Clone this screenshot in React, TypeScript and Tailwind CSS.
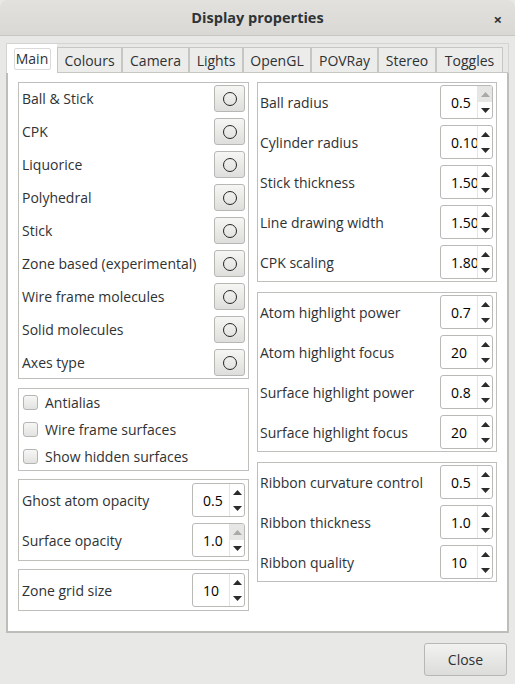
import React from "react";

const FONT = { fontFamily: '"Open Sans", "Noto Sans", sans-serif' };

function UpArrow({ disabled }: { disabled?: boolean }) {
  return (
    <svg width="9" height="5" viewBox="0 0 9 5">
      <path d="M0 5 L4.5 0 L9 5 Z" fill={disabled ? "#a9a9a9" : "#2b2b2b"} />
    </svg>
  );
}
function DownArrow() {
  return (
    <svg width="9" height="5" viewBox="0 0 9 5">
      <path d="M0 0 L4.5 5 L9 0 Z" fill="#2b2b2b" />
    </svg>
  );
}

function Spin({ value, upDisabled }: { value: string; upDisabled?: boolean }) {
  return (
    <div className="flex h-[34px] w-[53px] shrink-0 overflow-hidden rounded-[3px] border border-[#b9b9b6] bg-white">
      <div className="flex min-w-0 flex-1 items-center overflow-hidden whitespace-nowrap pl-[10px] text-[14px] text-black">
        {value}
      </div>
      <div className="flex w-[15px] flex-col border-l border-[#e4e4e2]">
        <div
          className={
            upDisabled
              ? "flex flex-1 items-center justify-center bg-[#e6e6e4]"
              : "flex flex-1 items-center justify-center"
          }
        >
          <UpArrow disabled={upDisabled} />
        </div>
        <div className="flex flex-1 items-center justify-center">
          <DownArrow />
        </div>
      </div>
    </div>
  );
}

function StyleButton() {
  return (
    <div className="flex h-[27px] w-[31px] items-center justify-center rounded-[3px] border border-[#b7b7b4] bg-gradient-to-b from-[#f6f6f5] to-[#dededc]">
      <div className="h-[14px] w-[14px] rounded-full border border-[#262626]" />
    </div>
  );
}

function Checkbox() {
  return (
    <div className="h-[15px] w-[15px] rounded-[3px] border border-[#b4b4b1] bg-gradient-to-b from-[#f7f7f6] to-[#e2e2e0]" />
  );
}

const styles = [
  "Ball & Stick",
  "CPK",
  "Liquorice",
  "Polyhedral",
  "Stick",
  "Zone based (experimental)",
  "Wire frame molecules",
  "Solid molecules",
  "Axes type",
];

const tabs: { name: string; w: string }[] = [
  { name: "Colours", w: "w-[65px]" },
  { name: "Camera", w: "w-[67px]" },
  { name: "Lights", w: "w-[54px]" },
  { name: "OpenGL", w: "w-[68px]" },
  { name: "POVRay", w: "w-[67px]" },
  { name: "Stereo", w: "w-[58px]" },
  { name: "Toggles", w: "w-[67px]" },
];

function SpinRow({ label, value, upDisabled }: { label: string; value: string; upDisabled?: boolean }) {
  return (
    <div className="flex h-[34px] items-center justify-between">
      <span>{label}</span>
      <Spin value={value} upDisabled={upDisabled} />
    </div>
  );
}

export default function App() {
  return (
    <div
      className="flex h-[684px] w-[515px] flex-col overflow-hidden bg-[#e8e8e7] text-[14px] text-[#2f3234]"
      style={FONT}
    >
      {/* title bar */}
      <div className="relative flex h-[36px] shrink-0 items-center justify-center rounded-t-[8px] border-b border-[#c9c7c3] bg-gradient-to-b from-[#e3e1de] to-[#dad8d4]">
        <span className="text-[14.5px] font-bold text-[#2e3436]">Display properties</span>
        <span className="absolute right-[13px] top-[8px] text-[15px] font-bold text-[#2e3436]">×</span>
      </div>

      {/* tab widget */}
      <div className="mx-[6px] mt-[7px] flex h-[590px] flex-col">
        <div className="flex h-[30px] border-l border-r border-t border-[#d4d4d2]">
          <div className="flex h-[29px] w-[50px] items-center justify-center self-end bg-white">
            <div className="flex h-[22px] w-[37px] items-center justify-center rounded-[2px] border border-[#dadad8] text-[#2f3234]">
              Main
            </div>
          </div>
          {tabs.map((t) => (
            <div
              key={t.name}
              className={`${t.w} mt-[3px] flex h-[26px] items-center justify-center border border-[#c6c6c3] bg-[#ececeb] text-[#2f3234]`}
            >
              {t.name}
            </div>
          ))}
          <div className="flex-1 border-b border-[#c6c6c3]" />
        </div>
        <div className="flex flex-1 gap-[8px] border-x-2 border-b-2 border-[#bdbdb9] bg-white px-[10px] pt-[9px]">
          {/* left column */}
          <div className="flex w-[231px] flex-col">
            <div className="flex flex-col gap-[6px] border border-[#bfbfbc] px-[3px] py-[2px]">
              {styles.map((s) => (
                <div key={s} className="flex h-[27px] items-center justify-between">
                  <span>{s}</span>
                  <StyleButton />
                </div>
              ))}
            </div>
            <div className="mt-[9px] flex flex-col border border-[#bfbfbc] pl-[4px]">
              {["Antialias", "Wire frame surfaces", "Show hidden surfaces"].map((c) => (
                <div key={c} className="flex h-[27px] items-center gap-[7px]">
                  <Checkbox />
                  <span>{c}</span>
                </div>
              ))}
            </div>
            <div className="mt-[8px] flex flex-col gap-[6px] border border-[#bfbfbc] py-[3px] pl-[3px] pr-[3px]">
              <SpinRow label="Ghost atom opacity" value="0.5" />
              <SpinRow label="Surface opacity" value="1.0" upDisabled />
            </div>
            <div className="mt-[8px] flex flex-col border border-[#bfbfbc] py-[3px] pl-[3px] pr-[3px]">
              <SpinRow label="Zone grid size" value="10" />
            </div>
          </div>

          {/* right column */}
          <div className="flex w-[240px] flex-col">
            <div className="flex flex-col gap-[6px] border border-[#bfbfbc] py-[2px] pl-[2px] pr-[3px]">
              <SpinRow label="Ball radius" value="0.5" upDisabled />
              <SpinRow label="Cylinder radius" value="0.10" />
              <SpinRow label="Stick thickness" value="1.50" />
              <SpinRow label="Line drawing width" value="1.50" />
              <SpinRow label="CPK scaling" value="1.80" />
            </div>
            <div className="mt-[10px] flex flex-col gap-[6px] border border-[#bfbfbc] py-[2px] pl-[2px] pr-[3px]">
              <SpinRow label="Atom highlight power" value="0.7" />
              <SpinRow label="Atom highlight focus" value="20" />
              <SpinRow label="Surface highlight power" value="0.8" />
              <SpinRow label="Surface highlight focus" value="20" />
            </div>
            <div className="mt-[10px] flex flex-col gap-[6px] border border-[#bfbfbc] py-[2px] pl-[2px] pr-[3px]">
              <SpinRow label="Ribbon curvature control" value="0.5" />
              <SpinRow label="Ribbon thickness" value="1.0" />
              <SpinRow label="Ribbon quality" value="10" />
            </div>
          </div>
        </div>
      </div>

      {/* footer */}
      <div className="mt-[10px] flex justify-end pr-[8px]">
        <div className="flex h-[33px] w-[83px] items-center justify-center rounded-[3px] border border-[#b7b7b4] bg-gradient-to-b from-[#f2f2f1] to-[#dcdcda] text-[#2f3234]">
          Close
        </div>
      </div>
    </div>
  );
}
